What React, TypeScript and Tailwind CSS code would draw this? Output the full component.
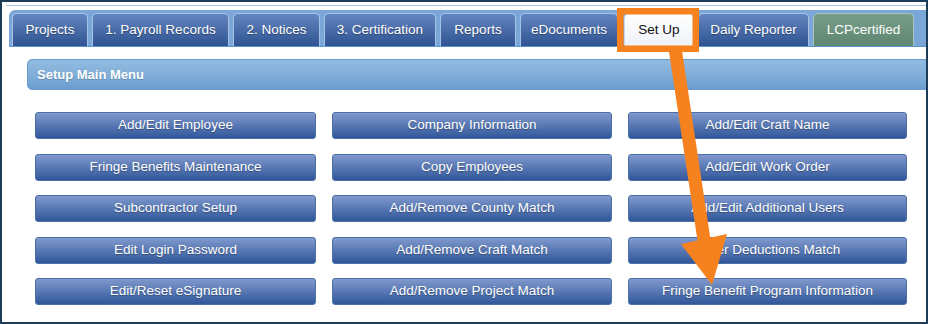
import React from "react";

const tabs = [
  { label: "Projects", w: "w-[76px]" },
  { label: "1. Payroll Records", w: "w-[137px]" },
  { label: "2. Notices", w: "w-[87px]" },
  { label: "3. Certification", w: "w-[112px]" },
  { label: "Reports", w: "w-[76px]" },
  { label: "eDocuments", w: "w-[98px]" },
];

const buttons = [
  "Add/Edit Employee",
  "Company Information",
  "Add/Edit Craft Name",
  "Fringe Benefits Maintenance",
  "Copy Employees",
  "Add/Edit Work Order",
  "Subcontractor Setup",
  "Add/Remove County Match",
  "Add/Edit Additional Users",
  "Edit Login Password",
  "Add/Remove Craft Match",
  "Other Deductions Match",
  "Edit/Reset eSignature",
  "Add/Remove Project Match",
  "Fringe Benefit Program Information",
];

function Tab({ label, w }: { label: string; w: string }) {
  return (
    <div
      className={`${w} h-[33px] flex items-center justify-center rounded-t-[5px] border border-b-0 border-[#a7c2e3] bg-gradient-to-b from-[#6486c0] to-[#2f5392] text-white text-[13.5px] [text-shadow:0_1px_1px_rgba(0,0,0,0.35)]`}
    >
      {label}
    </div>
  );
}

export default function App() {
  return (
    <div className="relative w-[928px] h-[324px] font-['Liberation_Sans',Arial,sans-serif]">
      <div className="w-full h-full border-2 border-[#1d3c58] bg-white overflow-hidden">
        <div className="pt-[3px]">
          <div className="h-px bg-[#a9c3df] ml-[4px]" />
        </div>
        <div className="pt-[4px] pl-[7px]">
          <div className="h-[37px] w-[940px] rounded-tl-[6px] bg-[#7aa7d7] border-b border-[#5f93cb] pl-[3px] flex items-end gap-[4px]">
            {tabs.map((t) => (
              <Tab key={t.label} label={t.label} w={t.w} />
            ))}
            <div className="ml-[2px] w-[70px] h-[33px] flex items-center justify-center rounded-t-[5px] border border-b-0 border-[#c9d8ea] bg-gradient-to-b from-white to-[#eef2f8] text-[#111] text-[13.5px]">
              Set Up
            </div>
            <Tab label="Daily Reporter" w="w-[111px]" />
            <div className="w-[101px] h-[33px] flex items-center justify-center rounded-t-[5px] border border-b-0 border-[#a9c4bb] bg-gradient-to-b from-[#789d89] to-[#5f8670] text-white text-[13.5px]">
              LCPcertified
            </div>
          </div>
        </div>
        <div className="pt-[12px] pl-[25px]">
          <div className="h-[31px] w-[920px] rounded-l-[5px] border border-[#6c9bcf] bg-gradient-to-b from-[#91badf] via-[#82afd9] to-[#6a9ecf] flex items-center pl-[9px] text-white font-bold text-[13px] [text-shadow:0_1px_1px_rgba(0,0,0,0.2)]">
            Setup Main Menu
          </div>
        </div>
        <div className="pt-[22px] pl-[33px] grid grid-cols-[281px_280px_279px] gap-x-[16px] gap-y-[14.5px]">
          {buttons.map((b) => (
            <div
              key={b}
              className="h-[27px] flex items-center justify-center rounded-[3px] border border-[#4c6fa6] bg-gradient-to-b from-[#8099cd] to-[#31579a] text-white text-[13.5px] [text-shadow:0_1px_1px_rgba(0,0,0,0.3)]"
            >
              {b}
            </div>
          ))}
        </div>
      </div>
      <svg className="absolute inset-0 pointer-events-none" width="928" height="324" viewBox="0 0 928 324">
        <rect x="620.25" y="11.25" width="75.5" height="37.5" fill="none" stroke="#f5821f" strokeWidth="6.5" />
        <line x1="675" y1="48" x2="704" y2="240" stroke="#f5821f" strokeWidth="13" />
        <polygon points="681,244 727,234 712,285" fill="#f5821f" />
      </svg>
    </div>
  );
}
